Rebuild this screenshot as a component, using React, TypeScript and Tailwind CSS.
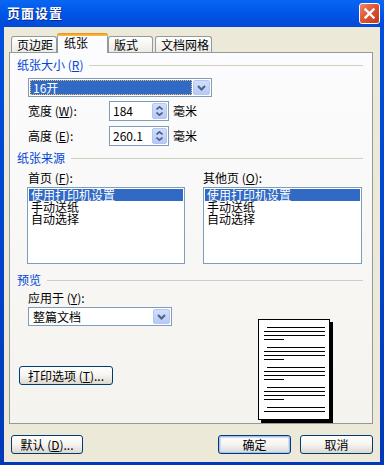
import React from "react";

function Acc({ k }: { k: string }) {
  return (
    <span>
      (<span className="underline underline-offset-[1px]">{k}</span>)
    </span>
  );
}

function GroupHeader({ children }: { children: React.ReactNode }) {
  return (
    <div className="flex items-center h-[12px]">
      <span className="text-[#0046D5] whitespace-nowrap">{children}</span>
      <div className="flex-1 h-px bg-[#D0D0BF] ml-[6px]" />
    </div>
  );
}

function DropBtn() {
  return (
    <div className="w-[17px] h-full rounded-[2px] border border-[#B4C6EF] bg-gradient-to-b from-[#D2DEFC] to-[#B6C9F6] flex items-center justify-center">
      <svg width="9" height="6" viewBox="0 0 9 6">
        <path d="M1 1 L4.5 4.5 L8 1" stroke="#4D6185" strokeWidth="2" fill="none" />
      </svg>
    </div>
  );
}

function Spin() {
  return (
    <div className="w-[15px] h-full rounded-[2px] border border-[#B4C6EF] bg-gradient-to-b from-[#D2DEFC] to-[#B6C9F6] flex flex-col items-center justify-center gap-[2px]">
      <svg width="7" height="4" viewBox="0 0 7 4">
        <path d="M0.5 3.5 L3.5 0.8 L6.5 3.5" stroke="#4D6185" strokeWidth="1.6" fill="none" />
      </svg>
      <svg width="7" height="4" viewBox="0 0 7 4">
        <path d="M0.5 0.5 L3.5 3.2 L6.5 0.5" stroke="#4D6185" strokeWidth="1.6" fill="none" />
      </svg>
    </div>
  );
}

function NumField({ value }: { value: string }) {
  return (
    <div className="w-[60px] h-[20px] border border-[#7F9DB9] bg-white flex p-px">
      <div className="flex-1 pl-[2px] flex items-center">{value}</div>
      <Spin />
    </div>
  );
}

function ListBox() {
  return (
    <div className="h-[77px] border border-[#7F9DB9] bg-white p-px flex flex-col">
      <div className="h-[12px] bg-[#316AC5] text-white pl-[2px]">使用打印机设置</div>
      <div className="h-[12px] pl-[2px]">手动送纸</div>
      <div className="h-[12px] pl-[2px]">自动选择</div>
    </div>
  );
}

function Btn({ children, w, def }: { children: React.ReactNode; w: string; def?: boolean }) {
  return (
    <div
      className={
        w +
        " h-[19px] rounded-[3px] border border-[#003C74] bg-gradient-to-b from-[#FFFFFF] via-[#F5F4F0] to-[#DCD8CE] flex items-center justify-center " +
        (def ? "shadow-[inset_0_0_0_1px_#A6C0F0,inset_0_0_0_2px_#CFDDF9]" : "")
      }
    >
      {children}
    </div>
  );
}

function PageGroup({ lines }: { lines: number }) {
  const all = [
    <div key="a" className="h-px bg-black ml-[3px]" />,
    <div key="b" className="h-px bg-black" />,
    <div key="c" className="h-px bg-black" />,
    <div key="d" className="h-px bg-black w-[20px]" />,
  ];
  return <div className="flex flex-col gap-[3px]">{all.slice(0, lines)}</div>;
}

function Tab({ children, w, extra }: { children: React.ReactNode; w: string; extra?: string }) {
  return (
    <div
      className={
        w +
        " h-[16px] mb-px rounded-t-[3px] border border-b-0 border-[#919B9C] bg-gradient-to-b from-[#FFFFFF] to-[#ECEBE6] flex items-center pl-[5px] " +
        (extra || "")
      }
    >
      {children}
    </div>
  );
}

export default function App() {
  return (
    <div className="w-[384px] h-[465px] flex flex-col bg-gradient-to-b from-[#0050E0] to-[#0039B8] font-['Noto_Sans_CJK_SC','Noto_Sans',sans-serif] text-[12px] leading-[12px] text-black select-none">
      {/* Title bar */}
      <div className="h-[27px] flex items-center pl-[7px] pr-[4px] pb-[1px] bg-gradient-to-b from-[#0A66F2] via-[#0056E8] to-[#0049D6]">
        <span className="flex-1 text-white font-bold text-[13px] leading-[14px] tracking-[1px] [text-shadow:1px_1px_0_#0A2A8E]">
          页面设置
        </span>
        <div className="w-[21px] h-[21px] rounded-[3px] border border-white bg-gradient-to-br from-[#EC8466] via-[#DC5230] to-[#C03A16] flex items-center justify-center">
          <svg width="11" height="11" viewBox="0 0 11 11">
            <path d="M1.5 1.5 L9.5 9.5 M9.5 1.5 L1.5 9.5" stroke="white" strokeWidth="2.4" strokeLinecap="square" />
          </svg>
        </div>
      </div>

      {/* Client area */}
      <div className="flex-1 mx-[4px] mb-[3px] bg-[#ECE9D8] flex flex-col pt-[6px] pl-[5px] pr-[7px]">
        {/* Tabs */}
        <div className="h-[20px] flex items-end pl-[2px] relative z-10 -mb-px">
          <Tab w="w-[46px]">页边距</Tab>
          <div className="w-[51px] h-[20px] rounded-t-[3px] border-x border-[#919B9C] bg-[#FCFCFE] flex flex-col relative z-10">
            <div className="h-[3px] -mx-px rounded-t-[3px] bg-gradient-to-b from-[#E68B2C] to-[#FFC73C]" />
            <div className="flex-1 flex items-center pl-[6px] pb-[4px]">纸张</div>
          </div>
          <Tab w="w-[45px]">版式</Tab>
          <Tab w="w-[57px]" extra="ml-[2px]">文档网格</Tab>
        </div>

        {/* Panel */}
        <div className="h-[372px] border border-[#919B9C] bg-gradient-to-b from-[#FCFCFE] to-[#F4F3EE] flex flex-col pt-[6px] pl-[7px] pr-[9px]">
          <GroupHeader>
            纸张大小 <Acc k="R" />
          </GroupHeader>

          <div className="ml-[11px] mt-[7px] w-[184px] h-[19px] border border-[#7F9DB9] bg-white flex p-px gap-px">
            <div className="flex-1 bg-[#316AC5] text-white border border-dotted border-[#F3C46A] flex items-center pl-[2px]">
              16开
            </div>
            <DropBtn />
          </div>

          <div className="ml-[11px] mt-[4px] flex items-center h-[20px]">
            <div className="w-[81px]">
              宽度 <Acc k="W" />:
            </div>
            <NumField value="184" />
            <div className="ml-[4px]">毫米</div>
          </div>
          <div className="ml-[11px] mt-[5px] flex items-center h-[20px]">
            <div className="w-[81px]">
              高度 <Acc k="E" />:
            </div>
            <NumField value="260.1" />
            <div className="ml-[4px]">毫米</div>
          </div>

          <div className="mt-[6px]">
            <GroupHeader>纸张来源</GroupHeader>
          </div>

          <div className="mt-[8px] flex pl-[10px] pr-px gap-[18px]">
            <div className="w-[158px] flex flex-col">
              <div className="h-[12px] pl-px">
                首页 <Acc k="F" />:
              </div>
              <div className="mt-[3px]">
                <ListBox />
              </div>
            </div>
            <div className="flex-1 flex flex-col">
              <div className="h-[12px]">
                其他页 <Acc k="O" />:
              </div>
              <div className="mt-[3px]">
                <ListBox />
              </div>
            </div>
          </div>

          <div className="mt-[10px]">
            <GroupHeader>预览</GroupHeader>
          </div>

          <div className="mt-[6px] flex">
            <div className="w-[241px] flex flex-col">
              <div className="ml-[11px] h-[12px]">
                应用于 <Acc k="Y" />:
              </div>
              <div className="ml-[11px] mt-[3px] w-[144px] h-[19px] border border-[#7F9DB9] bg-white flex p-px">
                <div className="flex-1 flex items-center pl-[3px]">整篇文档</div>
                <DropBtn />
              </div>
              <div className="ml-[2px] mt-[40px]">
                <Btn w="w-[94px]">
                  <span>
                    打印选项 <Acc k="T" />...
                  </span>
                </Btn>
              </div>
            </div>
            <div className="mt-[27px] w-[72px] h-[101px] border border-black bg-white shadow-[3px_3px_0_#000] overflow-hidden flex flex-col gap-[7px] pt-[7px] pl-[5px] pr-[4px]">
              <PageGroup lines={4} />
              <PageGroup lines={4} />
              <PageGroup lines={4} />
              <PageGroup lines={4} />
              <PageGroup lines={2} />
            </div>
          </div>
        </div>

        {/* Bottom buttons */}
        <div className="mt-[11px] flex items-center pl-[2px]">
          <Btn w="w-[72px]">
            <span>
              默认 <Acc k="D" />...
            </span>
          </Btn>
          <div className="flex-1" />
          <Btn w="w-[73px]" def>
            确定
          </Btn>
          <div className="w-[9px]" />
          <Btn w="w-[73px]">取消</Btn>
        </div>
      </div>
    </div>
  );
}
